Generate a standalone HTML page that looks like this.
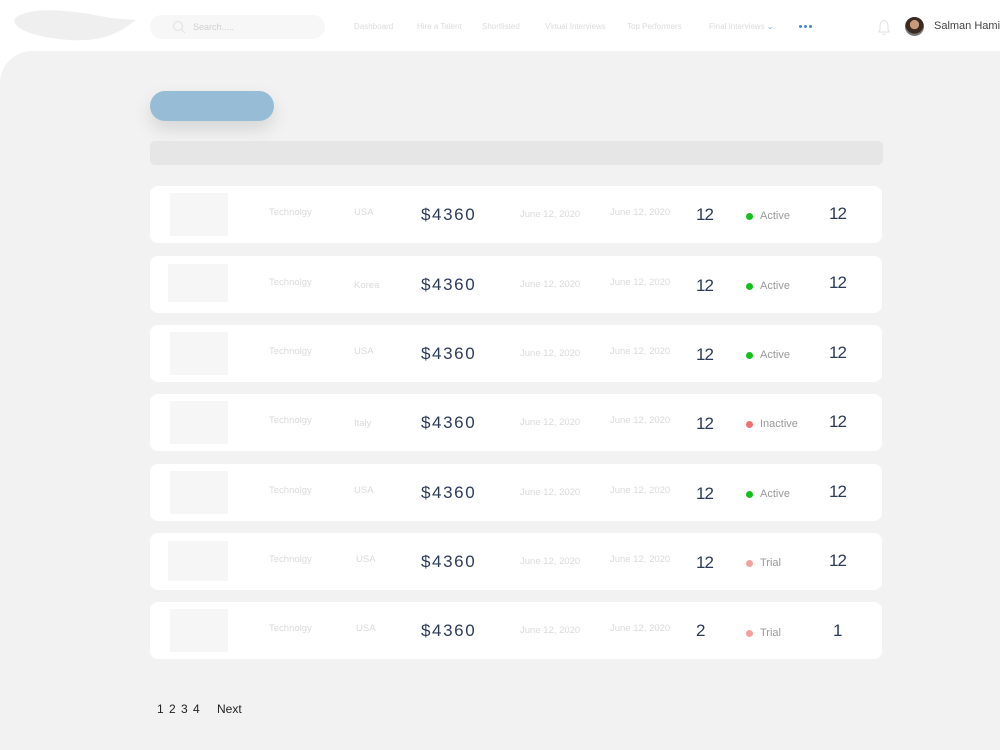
<!DOCTYPE html>
<html><head><style>
*{margin:0;padding:0;box-sizing:border-box}
body{width:1000px;height:750px;overflow:hidden;background:#fff;font-family:"Liberation Sans",sans-serif;position:relative}
.bg{position:absolute;left:0;top:51px;width:1000px;height:699px;background:#f2f2f2;border-top-left-radius:32px}
.abs{position:absolute;white-space:nowrap}
.nav{font-size:8px;color:#dcdcdc;top:22px}
.row{position:absolute;left:150px;width:732px;height:57px;background:#fff;border-radius:8px}
.row .th{position:absolute;left:20px;top:7px;width:58px;height:43px;background:#f6f6f6}
.row .t{position:absolute;font-size:9.5px;color:#dadada;top:21px}
.row .m{position:absolute;font-size:17px;color:#2c3a5a;top:19px;letter-spacing:1.6px}
.row .n{position:absolute;font-size:17px;color:#2c3a5a;top:19px;letter-spacing:-1px}
.row .s{position:absolute;font-size:11px;color:#9a9a9a;top:24px;left:610px}
.row .d{position:absolute;width:7px;height:7px;border-radius:50%;top:27px;left:596px}
</style></head><body>
<svg class="abs" style="left:10px;top:6px" width="130" height="36"><path d="M5 12 C20 0 60 4 90 10 C110 14 120 13 126 14 C110 26 95 36 60 34 C30 32 0 24 5 12Z" fill="#efefef"/></svg>
<div class="abs" style="left:150px;top:15px;width:175px;height:24px;border-radius:12px;background:#f7f7f7"></div>
<svg class="abs" style="left:172px;top:20px" width="14" height="14"><circle cx="6" cy="6" r="4.5" fill="none" stroke="#e4e4e4" stroke-width="1.2"/><path d="M9.5 9.5 L13 13" stroke="#e4e4e4" stroke-width="1.2"/></svg>
<div class="abs" style="left:193px;top:22px;font-size:9px;color:#cfcfcf">Search.....</div>
<div class="abs nav" style="left:354px">Dashboard</div>
<div class="abs nav" style="left:417px">Hire a Talent</div>
<div class="abs nav" style="left:482px">Shortlisted</div>
<div class="abs nav" style="left:545px">Virtual Interviews</div>
<div class="abs nav" style="left:627px">Top Performers</div>
<div class="abs nav" style="left:709px">Final Interviews <span style="color:#7aa6d6">⌄</span></div>
<div class="abs" style="left:799px;top:25px;width:3px;height:3px;border-radius:50%;background:#4a86c8;box-shadow:5px 0 #4a86c8,10px 0 #4a86c8"></div>
<svg class="abs" style="left:877px;top:19px" width="14" height="17"><path d="M7 1.5 C3.5 1.5 3 5 3 8 L3 11 L1.5 13 L12.5 13 L11 11 L11 8 C11 5 10.5 1.5 7 1.5Z M5.5 14.5 Q7 16.5 8.5 14.5" fill="none" stroke="#e2e2e2" stroke-width="1"/></svg>
<div class="abs" style="left:905px;top:17px;width:19px;height:19px;border-radius:50%;background:radial-gradient(circle at 50% 40%,#c79a7a 0 30%,#3a2a22 32% 60%,#777 62%)"></div>
<div class="abs" style="left:934px;top:20px;font-size:11px;color:#444">Salman Hamid</div>
<div class="bg"></div>
<div class="abs" style="left:150px;top:91px;width:124px;height:30px;border-radius:15px;background:#97bdd6;box-shadow:0 8px 18px rgba(0,0,0,.12)"></div>
<div class="abs" style="left:150px;top:141px;width:733px;height:24px;border-radius:5px;background:#e6e6e6"></div>

<div class="row" style="top:186px"><div class="th"></div><div class="t" style="left:119px">Technolgy</div><div class="t" style="left:204px">USA</div><div class="m" style="left:271px">$4360</div><div class="t" style="left:370px;top:23px">June 12, 2020</div><div class="t" style="left:460px">June 12, 2020</div><div class="n" style="left:546px">12</div><div class="d" style="background:#15c01a"></div><div class="s">Active</div><div class="n" style="left:679px;top:18px">12</div></div>
<div class="row" style="top:256px"><div class="th" style="left:18px;top:8px;height:38px;width:60px"></div><div class="t" style="left:119px">Technolgy</div><div class="t" style="left:204px;top:24px">Korea</div><div class="m" style="left:271px">$4360</div><div class="t" style="left:370px;top:23px">June 12, 2020</div><div class="t" style="left:460px">June 12, 2020</div><div class="n" style="left:546px;top:20px">12</div><div class="d" style="background:#15c01a"></div><div class="s">Active</div><div class="n" style="left:679px;top:17px">12</div></div>
<div class="row" style="top:325px"><div class="th"></div><div class="t" style="left:119px">Technolgy</div><div class="t" style="left:204px">USA</div><div class="m" style="left:271px">$4360</div><div class="t" style="left:370px;top:23px">June 12, 2020</div><div class="t" style="left:460px">June 12, 2020</div><div class="n" style="left:546px;top:20px">12</div><div class="d" style="background:#15c01a"></div><div class="s">Active</div><div class="n" style="left:679px;top:18px">12</div></div>
<div class="row" style="top:394px"><div class="th"></div><div class="t" style="left:119px">Technolgy</div><div class="t" style="left:204px;top:24px">Italy</div><div class="m" style="left:271px">$4360</div><div class="t" style="left:370px;top:23px">June 12, 2020</div><div class="t" style="left:460px">June 12, 2020</div><div class="n" style="left:546px;top:20px">12</div><div class="d" style="background:#f27070"></div><div class="s">Inactive</div><div class="n" style="left:679px;top:18px">12</div></div>
<div class="row" style="top:464px"><div class="th"></div><div class="t" style="left:119px">Technolgy</div><div class="t" style="left:204px">USA</div><div class="m" style="left:271px">$4360</div><div class="t" style="left:370px;top:23px">June 12, 2020</div><div class="t" style="left:460px">June 12, 2020</div><div class="n" style="left:546px;top:20px">12</div><div class="d" style="background:#15c01a"></div><div class="s">Active</div><div class="n" style="left:679px;top:18px">12</div></div>
<div class="row" style="top:533px"><div class="th" style="left:18px;top:8px;height:40px;width:60px"></div><div class="t" style="left:119px">Technolgy</div><div class="t" style="left:206px">USA</div><div class="m" style="left:271px">$4360</div><div class="t" style="left:370px;top:23px">June 12, 2020</div><div class="t" style="left:460px">June 12, 2020</div><div class="n" style="left:546px;top:20px">12</div><div class="d" style="background:#f5a09a"></div><div class="s">Trial</div><div class="n" style="left:679px;top:18px">12</div></div>
<div class="row" style="top:602px"><div class="th"></div><div class="t" style="left:119px">Technolgy</div><div class="t" style="left:206px">USA</div><div class="m" style="left:271px">$4360</div><div class="t" style="left:370px;top:23px">June 12, 2020</div><div class="t" style="left:460px">June 12, 2020</div><div class="n" style="left:546px;top:19px">2</div><div class="d" style="background:#f5a09a;top:28px"></div><div class="s" style="top:25px">Trial</div><div class="n" style="left:683px;top:19px">1</div></div>

<div class="abs" style="left:157px;top:702px;font-size:12px;color:#222;word-spacing:2px">1 2 3 4</div>
<div class="abs" style="left:217px;top:702px;font-size:12px;color:#222">Next</div>
</body></html>
